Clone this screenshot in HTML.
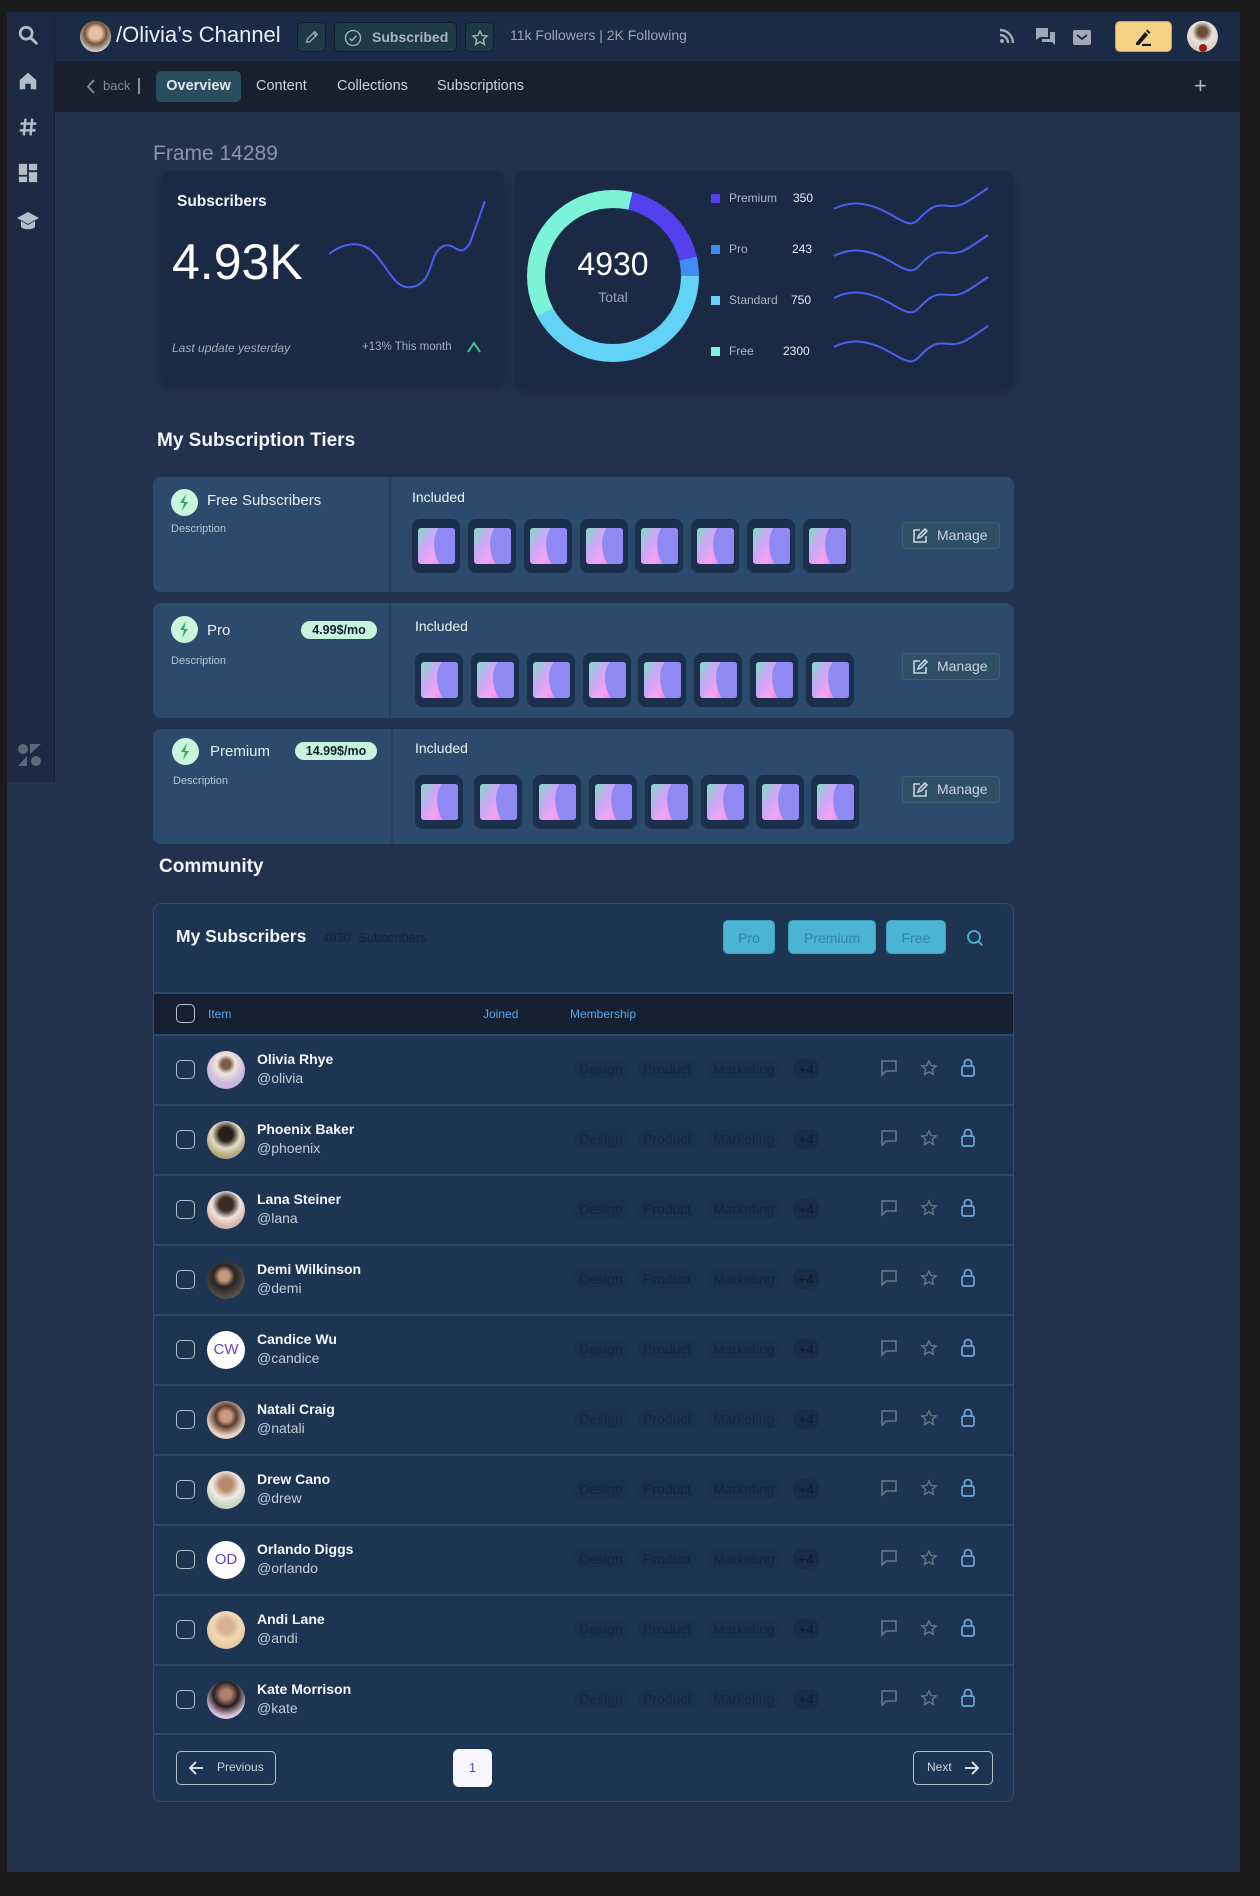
<!DOCTYPE html>
<html><head><meta charset="utf-8">
<style>
*{box-sizing:border-box;margin:0;padding:0}
body{width:1260px;height:1896px;background:#1b1b1b;font-family:"Liberation Sans",sans-serif;position:relative;overflow:hidden;color:#fff}
.abs{position:absolute}
#main{left:7px;top:12px;width:1233px;height:1860px;background:#22324d}
#side{left:7px;top:12px;width:48px;height:770px;background:#1b2a42;border-right:1px solid #15202f}
#top{left:55px;top:12px;width:1185px;height:49px;background:#1c2b45}
#nav{left:55px;top:61px;width:1185px;height:51px;background:#16202f}
.btn{position:absolute;border:1px solid #111c2a;background:#1f3a47;border-radius:5px}
.card{position:absolute;background:#1a2a45;border-radius:10px;box-shadow:0 3px 8px rgba(0,0,0,.25)}
.tier{position:absolute;left:153px;width:861px;height:115px;background:#2c4a6b;border-radius:8px}
.tier .div{position:absolute;left:236px;top:0;width:2px;height:100%;background:#24405f}
.ic{position:absolute;width:27px;height:27px;border-radius:50%;background:#c9f5dc}
.tt{position:absolute;font-size:15px;color:#e8eef5}
.desc{position:absolute;font-size:11px;color:#b7c4d3}
.price{position:absolute;height:18px;border-radius:9px;background:#c6f4dc;color:#12202e;font-size:12.5px;font-weight:bold;text-align:center;line-height:18px}
.inc{position:absolute;font-size:14px;color:#eef2f7}
.tile{position:absolute;width:48px;height:54px;background:#1c2f4c;border-radius:8px}
.tile i{position:absolute;left:6px;top:9px;width:37px;height:36px;border-radius:3px;background:linear-gradient(120deg,#7ee0c0 0%,#c9a8f5 30%,#f4a3f0 55%,#ec8ff0 70%),#8c8cf5;overflow:hidden}
.tile i:after{content:"";position:absolute;left:16px;top:-4px;width:30px;height:48px;border-radius:40% 0 0 60%;background:#8f8af3}
.mng{position:absolute;left:749px;width:98px;height:27px;background:#2e4f66;border:1px solid #3c6076;border-radius:4px;color:#c9d3df;font-size:14px;line-height:25px;padding-left:34px}
.mng svg{position:absolute;left:9px;top:5px}
#tbl{left:153px;top:903px;width:861px;height:899px;background:#1d3453;border:1px solid #2f4a6a;border-radius:8px;overflow:hidden}
.row{position:absolute;left:0;width:861px;height:70px;border-top:2px solid #2d4a6b}
.cb{position:absolute;width:19px;height:19px;border:1.5px solid #b6c0cc;border-radius:5px}
.av{position:absolute;left:53px;top:15px;width:38px;height:38px;border-radius:50%}
.nm{position:absolute;left:103px;top:15px;font-size:14px;color:#f4f6f9;font-weight:bold}
.hd{position:absolute;left:103px;top:34px;font-size:14px;color:#c5cdd8}
.tag{position:absolute;top:23px;font-size:14px;color:#13224a;padding:2px 5px;border-radius:8px;background:#1b3150}
.pf{position:absolute;top:16px;width:52px;height:34px;background:#4bb3d4;border-radius:5px;color:#2d86ad;font-size:14px;text-align:center;line-height:34px;border:1px solid #3d9fc2}
</style></head><body>
<div id="main" class="abs"></div>
<div id="side" class="abs">
<svg class="abs" style="left:10px;top:12px" width="22" height="22" viewBox="0 0 24 24"><circle cx="10" cy="10" r="6.5" fill="none" stroke="#b3bcc8" stroke-width="3"/><path d="M15 15l6 6" stroke="#b3bcc8" stroke-width="3.2" stroke-linecap="round"/></svg>
<svg class="abs" style="left:10px;top:58px" width="22" height="22" viewBox="0 0 24 24"><path d="M3 11L12 3l9 8v10h-6v-6h-6v6H3z" fill="#b3bcc8"/></svg>
<svg class="abs" style="left:11px;top:105px" width="20" height="20" viewBox="0 0 24 24"><path d="M9 2L7 22M17 2l-2 20M3 8h19M2 16h19" stroke="#b3bcc8" stroke-width="3"/></svg>
<svg class="abs" style="left:10px;top:150px" width="22" height="22" viewBox="0 0 24 24"><path d="M2 2h9v12H2zM13 2h9v7h-9zM13 11h9v11h-9zM2 16h9v6H2z" fill="#b3bcc8"/></svg>
<svg class="abs" style="left:9px;top:198px" width="24" height="22" viewBox="0 0 24 22"><path d="M12 2L1 8l11 6 11-6z" fill="#b3bcc8"/><path d="M5 11v6c3 3 11 3 14 0v-6l-7 4z" fill="#b3bcc8"/></svg>
<svg class="abs" style="left:10px;top:731px" width="26" height="24" viewBox="0 0 26 24"><circle cx="6" cy="6" r="5" fill="#5e6a7a"/><path d="M13 1h11l-11 10z" fill="#5e6a7a"/><path d="M1 23l9-10v10z" fill="#5e6a7a"/><circle cx="19" cy="18" r="5" fill="#5e6a7a"/></svg>
</div>
<div id="top" class="abs"></div>
<div id="nav" class="abs"></div>
<div class="abs" style="left:80px;top:21px;width:31px;height:31px;border-radius:50%;background:radial-gradient(circle at 50% 40%,#e2c2a6 0 25%,#7a5236 45%,#cfd6df 75%)"></div>
<div class="abs" style="left:116px;top:22px;font-size:22px;color:#e8edf3">/Olivia’s Channel</div>
<div class="btn" style="left:297px;top:22px;width:29px;height:30px"><svg style="position:absolute;left:6px;top:6px" width="16" height="16" viewBox="0 0 24 24"><path d="M4 20l1-5L16 4l4 4L9 19z M14 6l4 4" fill="none" stroke="#aab4c0" stroke-width="1.8"/></svg></div>
<div class="btn" style="left:334px;top:22px;width:123px;height:30px"><svg style="position:absolute;left:9px;top:6px" width="18" height="18" viewBox="0 0 24 24"><circle cx="12" cy="12" r="10" fill="none" stroke="#aab4c0" stroke-width="1.8"/><path d="M7.5 12.5l3 3 6-6.5" fill="none" stroke="#aab4c0" stroke-width="1.8"/></svg><span style="position:absolute;left:37px;top:6px;font-size:14px;color:#aab4c0;font-weight:bold">Subscribed</span></div>
<div class="btn" style="left:465px;top:22px;width:29px;height:30px"><svg style="position:absolute;left:5px;top:6px" width="18" height="18" viewBox="0 0 24 24"><path d="M12 2.5l2.9 6.2 6.6.7-5 4.5 1.4 6.6L12 17.2l-5.9 3.3 1.4-6.6-5-4.5 6.6-.7z" fill="none" stroke="#aab4c0" stroke-width="1.8"/></svg></div>
<div class="abs" style="left:510px;top:27px;font-size:14px;color:#9aa5b4">11k Followers | 2K Following</div>
<svg class="abs" style="left:999px;top:28px" width="16" height="16" viewBox="0 0 16 16"><circle cx="3" cy="13" r="2" fill="#a0a9b5"/><path d="M1 7a8 8 0 0 1 8 8M1 2a13 13 0 0 1 13 13" fill="none" stroke="#a0a9b5" stroke-width="2.4"/></svg>
<svg class="abs" style="left:1036px;top:28px" width="19" height="18" viewBox="0 0 19 18"><path d="M0 0h12v9H4l-4 3z" fill="#a0a9b5"/><path d="M14 4h5v13l-3-3H6v-3h8z" fill="#a0a9b5"/></svg>
<svg class="abs" style="left:1073px;top:30px" width="18" height="15" viewBox="0 0 18 15"><rect width="18" height="15" rx="2" fill="#a0a9b5"/><path d="M4 5l5 4 5-4" fill="none" stroke="#1c2b45" stroke-width="1.8"/></svg>
<div class="abs" style="left:1115px;top:21px;width:57px;height:31px;background:#f5d185;border:1px solid #c7a45b;border-radius:5px"><svg style="position:absolute;left:18px;top:7px" width="20" height="17" viewBox="0 0 20 17"><path d="M2 14L11 3l3 3-9 10H2z" fill="#16181c"/><path d="M12 2l1.5-1.5 3 3L15 5z" fill="#16181c"/><path d="M8 16h9" stroke="#16181c" stroke-width="2.2"/></svg></div>
<div class="abs" style="left:1187px;top:21px;width:31px;height:31px;border-radius:50%;background:radial-gradient(circle at 50% 35%,#6b4b3c 0 18%,#e9e2da 40%,#d9d0c6 70%);overflow:hidden"><div style="position:absolute;left:12px;top:23px;width:8px;height:8px;background:#9b1b1b;border-radius:50%"></div></div>
<svg class="abs" style="left:86px;top:79px" width="10" height="15" viewBox="0 0 10 15"><path d="M8 1L2 7.5 8 14" fill="none" stroke="#8691a0" stroke-width="1.8"/></svg>
<div class="abs" style="left:103px;top:78px;font-size:13px;color:#7f8a99">back</div>
<div class="abs" style="left:138px;top:78px;width:2px;height:16px;background:#8691a0"></div>
<div class="abs" style="left:156px;top:71px;width:85px;height:31px;background:#294d5c;border-radius:5px;color:#dfe6ee;font-size:14.5px;font-weight:bold;text-align:center;line-height:31px">Overview</div>
<div class="abs" style="left:256px;top:78px;font-size:14.5px;color:#c9d1db">Content</div>
<div class="abs" style="left:337px;top:78px;font-size:14.5px;color:#c9d1db">Collections</div>
<div class="abs" style="left:437px;top:78px;font-size:14.5px;color:#c9d1db">Subscriptions</div>
<div class="abs" style="left:1194px;top:73px;font-size:22px;color:#aeb7c3">+</div>
<div class="abs" style="left:153px;top:142px;font-size:21px;color:#8a96a8">Frame 14289</div>
<div class="card" style="left:161px;top:171px;width:343px;height:215px"></div>
<div class="abs" style="left:177px;top:193px;font-size:15.5px;font-weight:bold;color:#f2f5f8">Subscribers</div>
<div class="abs" style="left:172px;top:233px;font-size:50px;color:#fff">4.93K</div>
<svg class="abs" style="left:320px;top:195px" width="180" height="100" viewBox="320 195 180 100"><path d="M329 254C345 242 362 240 375 254S395 290 412 287S430 265 435 255S447 243 455 248S465 250 470 243L485 201" fill="none" stroke="#4b5ff0" stroke-width="2"/></svg>
<div class="abs" style="left:172px;top:341px;font-size:12px;font-style:italic;color:#a3adbb">Last update yesterday</div>
<div class="abs" style="left:362px;top:341px;font-size:11.5px;color:#a3adbb">+13% This month</div>
<svg class="abs" style="left:466px;top:341px" width="16" height="12" viewBox="0 0 16 12"><path d="M2 11L8 2l6 9" fill="none" stroke="#3ec48a" stroke-width="2"/></svg>
<div class="card" style="left:515px;top:171px;width:499px;height:217px"></div>
<div class="abs" style="left:527px;top:190px;width:172px;height:172px;border-radius:50%;background:conic-gradient(#7cf3d9 0 13deg,#5440ee 13deg 77deg,#3f8cf2 77deg 90deg,#63d2f7 90deg 242deg,#7cf3d9 242deg 360deg)"></div>
<div class="abs" style="left:545px;top:208px;width:136px;height:136px;border-radius:50%;background:#1a2a45"></div>
<div class="abs" style="left:545px;top:246px;width:136px;text-align:center;font-size:32px;color:#fff">4930</div>
<div class="abs" style="left:545px;top:289px;width:136px;text-align:center;font-size:14px;color:#9aa5b4">Total</div>
<div class="abs" style="left:711px;top:194px;width:9px;height:9px;background:#5440ee"></div>
<div class="abs" style="left:729px;top:191px;font-size:12px;color:#aeb7c3">Premium</div><div class="abs" style="left:793px;top:191px;font-size:12px;color:#e8edf3">350</div>
<div class="abs" style="left:711px;top:245px;width:9px;height:9px;background:#3f8cf2"></div>
<div class="abs" style="left:729px;top:242px;font-size:12px;color:#aeb7c3">Pro</div><div class="abs" style="left:792px;top:242px;font-size:12px;color:#e8edf3">243</div>
<div class="abs" style="left:711px;top:296px;width:9px;height:9px;background:#63d2f7"></div>
<div class="abs" style="left:729px;top:293px;font-size:12px;color:#aeb7c3">Standard</div><div class="abs" style="left:791px;top:293px;font-size:12px;color:#e8edf3">750</div>
<div class="abs" style="left:711px;top:347px;width:9px;height:9px;background:#7cf3d9"></div>
<div class="abs" style="left:729px;top:344px;font-size:12px;color:#aeb7c3">Free</div><div class="abs" style="left:783px;top:344px;font-size:12px;color:#e8edf3">2300</div>
<svg class="abs" style="left:830px;top:180px" width="170" height="200" viewBox="0 0 170 200">
<g fill="none" stroke="#4b5ff0" stroke-width="2">
<path d="M4 29C25 18 45 25 65 37S85 42 95 33S110 25 120 26S135 24 158 8"/>
<path d="M4 29C25 18 45 25 65 37S85 42 95 33S110 25 120 26S135 24 158 8" transform="translate(0,47)"/>
<path d="M4 29C25 18 45 25 65 37S85 42 95 33S110 25 120 26S135 24 158 8" transform="translate(0,89)"/>
<path d="M4 29C25 18 45 25 65 37S85 42 95 33S110 25 120 26S135 24 158 8" transform="translate(0,138)"/>
</g></svg>
<div class="abs" style="left:157px;top:430px;font-size:19px;color:#f2f5f8;font-weight:bold">My Subscription Tiers</div>

<div class="tier" style="top:477px"><div class="div"></div>
<div class="ic" style="left:18px;top:12px"><svg width="27" height="27" viewBox="0 0 27 27"><path d="M15 5l-6 9h4l-2 8 6-9h-4z" fill="#2fa866"/></svg></div>
<div class="tt" style="left:54px;top:15px">Free Subscribers</div><div class="desc" style="left:18px;top:46px">Description</div>
<div class="inc" style="left:259px;top:12px">Included</div>
<div class="tile" style="left:259px;top:42px"><i></i></div><div class="tile" style="left:315px;top:42px"><i></i></div><div class="tile" style="left:371px;top:42px"><i></i></div><div class="tile" style="left:427px;top:42px"><i></i></div><div class="tile" style="left:482px;top:42px"><i></i></div><div class="tile" style="left:538px;top:42px"><i></i></div><div class="tile" style="left:594px;top:42px"><i></i></div><div class="tile" style="left:650px;top:42px"><i></i></div>
<div class="mng" style="top:45px"><svg width="16" height="16" viewBox="0 0 16 16"><path d="M8 2H2v12h12V8" fill="none" stroke="#c9d3df" stroke-width="1.6"/><path d="M6 10l1-3 6-6 2 2-6 6z" fill="none" stroke="#c9d3df" stroke-width="1.6"/></svg>Manage</div>
</div>

<div class="tier" style="top:603px"><div class="div"></div>
<div class="ic" style="left:18px;top:13px"><svg width="27" height="27" viewBox="0 0 27 27"><path d="M15 5l-6 9h4l-2 8 6-9h-4z" fill="#2fa866"/></svg></div>
<div class="tt" style="left:54px;top:19px">Pro</div><div class="price" style="left:148px;top:18px;width:76px">4.99$/mo</div><div class="desc" style="left:18px;top:52px">Description</div>
<div class="inc" style="left:262px;top:15px">Included</div>
<div class="tile" style="left:262px;top:50px"><i></i></div><div class="tile" style="left:318px;top:50px"><i></i></div><div class="tile" style="left:374px;top:50px"><i></i></div><div class="tile" style="left:430px;top:50px"><i></i></div><div class="tile" style="left:485px;top:50px"><i></i></div><div class="tile" style="left:541px;top:50px"><i></i></div><div class="tile" style="left:597px;top:50px"><i></i></div><div class="tile" style="left:653px;top:50px"><i></i></div>
<div class="mng" style="top:50px"><svg width="16" height="16" viewBox="0 0 16 16"><path d="M8 2H2v12h12V8" fill="none" stroke="#c9d3df" stroke-width="1.6"/><path d="M6 10l1-3 6-6 2 2-6 6z" fill="none" stroke="#c9d3df" stroke-width="1.6"/></svg>Manage</div>
</div>

<div class="tier" style="top:729px"><div class="div" style="left:238px"></div>
<div class="ic" style="left:19px;top:9px"><svg width="27" height="27" viewBox="0 0 27 27"><path d="M15 5l-6 9h4l-2 8 6-9h-4z" fill="#2fa866"/></svg></div>
<div class="tt" style="left:57px;top:14px">Premium</div><div class="price" style="left:142px;top:13px;width:82px">14.99$/mo</div><div class="desc" style="left:20px;top:46px">Description</div>
<div class="inc" style="left:262px;top:11px">Included</div>
<div class="tile" style="left:262px;top:46px"><i></i></div><div class="tile" style="left:321px;top:46px"><i></i></div><div class="tile" style="left:380px;top:46px"><i></i></div><div class="tile" style="left:436px;top:46px"><i></i></div><div class="tile" style="left:492px;top:46px"><i></i></div><div class="tile" style="left:548px;top:46px"><i></i></div><div class="tile" style="left:603px;top:46px"><i></i></div><div class="tile" style="left:658px;top:46px"><i></i></div>
<div class="mng" style="top:47px"><svg width="16" height="16" viewBox="0 0 16 16"><path d="M8 2H2v12h12V8" fill="none" stroke="#c9d3df" stroke-width="1.6"/><path d="M6 10l1-3 6-6 2 2-6 6z" fill="none" stroke="#c9d3df" stroke-width="1.6"/></svg>Manage</div>
</div>

<div class="abs" style="left:159px;top:856px;font-size:19px;color:#f2f5f8;font-weight:bold">Community</div>
<div id="tbl" class="abs">
<div class="abs" style="left:22px;top:22px;font-size:17.5px;font-weight:bold;color:#f2f5f8">My Subscribers</div>
<div class="abs" style="left:168px;top:26px;font-size:13px;color:#13223e">4930&nbsp; Subscribers</div>
<div class="pf" style="left:569px">Pro</div>
<div class="pf" style="left:634px;width:88px">Premium</div>
<div class="pf" style="left:732px;width:60px">Free</div>
<svg class="abs" style="left:812px;top:25px" width="18" height="18" viewBox="0 0 18 18"><circle cx="8" cy="8" r="6" fill="none" stroke="#4bb3d4" stroke-width="1.8"/><path d="M12.5 12.5l4 4" stroke="#4bb3d4" stroke-width="1.8"/></svg>
<div class="abs" style="left:0;top:88px;width:861px;height:43px;background:#141f31;border-top:2px solid #2d4a6b"></div>
<div class="cb" style="left:22px;top:100px"></div>
<div class="abs" style="left:54px;top:103px;font-size:12px;color:#5aa9e6">Item</div>
<div class="abs" style="left:329px;top:103px;font-size:12px;color:#5aa9e6">Joined</div>
<div class="abs" style="left:416px;top:103px;font-size:12px;color:#5aa9e6">Membership</div>
<div id="rows"></div>
<div class="abs" style="left:22px;top:847px;width:100px;height:34px;border:1.5px solid #b6c0cc;border-radius:5px;font-size:12px;color:#c9d1db;line-height:31px;padding-left:40px"><svg style="position:absolute;left:12px;top:9px" width="15" height="14" viewBox="0 0 15 14"><path d="M14 7H2M7 1L1 7l6 6" fill="none" stroke="#e8edf3" stroke-width="1.8"/></svg>Previous</div>
<div class="abs" style="left:299px;top:845px;width:39px;height:38px;background:#f7f5ff;border-radius:6px;text-align:center;line-height:38px;font-size:13px;color:#6941c6">1</div>
<div class="abs" style="left:759px;top:847px;width:80px;height:34px;border:1.5px solid #b6c0cc;border-radius:5px;font-size:12px;color:#c9d1db;line-height:31px;padding-left:13px">Next<svg style="position:absolute;left:50px;top:9px" width="15" height="14" viewBox="0 0 15 14"><path d="M1 7h12M8 1l6 6-6 6" fill="none" stroke="#e8edf3" stroke-width="1.8"/></svg></div>
<div class="abs" style="left:0;top:829px;width:861px;height:2px;background:#2d4a6b"></div>
</div>
<script>
var p=[["Olivia Rhye","olivia","radial-gradient(circle at 50% 35%,#7a5a4a 0 14%,#f0e6dc 30%,#cdb9dd 60%)"],["Phoenix Baker","phoenix","radial-gradient(circle at 50% 35%,#2a1e18 0 22%,#e6dcc4 45%,#b5a67a 70%)"],["Lana Steiner","lana","radial-gradient(circle at 50% 35%,#3a2a22 0 22%,#efe4dc 45%,#d9b5aa 70%)"],["Demi Wilkinson","demi","radial-gradient(circle at 45% 40%,#c29a80 0 16%,#2a2320 35%,#55504a 70%)"],["Candice Wu","candice","CW"],["Natali Craig","natali","radial-gradient(circle at 50% 40%,#c99a80 0 18%,#5a3a2a 35%,#e7d2c4 65%)"],["Drew Cano","drew","radial-gradient(circle at 50% 35%,#b78a70 0 20%,#f0ece6 45%,#c8d4c0 70%)"],["Orlando Diggs","orlando","OD"],["Andi Lane","andi","radial-gradient(circle at 50% 40%,#d9b090 0 22%,#f0d8b8 45%,#e8c8a0 70%)"],["Kate Morrison","kate","radial-gradient(circle at 50% 35%,#b08070 0 16%,#2a1e1e 40%,#d9c4dc 70%)"]];
var h="";
p.forEach(function(r,i){
var av=(r[2].length==2)?'<div class="av" style="background:#fff;color:#6941c6;text-align:center;line-height:38px;font-size:15px">'+r[2]+'</div>':'<div class="av" style="background:'+r[2]+'"></div>';
h+='<div class="row" style="top:'+(130+i*70)+'px"><div class="cb" style="left:22px;top:24px"></div>'+av+'<div class="nm">'+r[0]+'</div><div class="hd">@'+r[1]+'</div>'+
'<div class="tag" style="left:420px">Design</div><div class="tag" style="left:484px">Product</div><div class="tag" style="left:554px">Marketing</div><div class="tag" style="left:639px;background:#1a2d48;color:#0f1a2e">+4</div>'+
'<svg style="position:absolute;left:727px;top:24px" width="16" height="17" viewBox="0 0 16 17"><path d="M1 1h14v10H5l-4 4z" fill="none" stroke="#6b7686" stroke-width="1.6"/></svg>'+
'<svg style="position:absolute;left:766px;top:23px" width="18" height="18" viewBox="0 0 24 24"><path d="M12 2.5l2.9 6.2 6.6.7-5 4.5 1.4 6.6L12 17.2l-5.9 3.3 1.4-6.6-5-4.5 6.6-.7z" fill="none" stroke="#6b7686" stroke-width="1.8"/></svg>'+
'<svg style="position:absolute;left:807px;top:22px" width="14" height="19" viewBox="0 0 14 19"><rect x="1" y="8" width="12" height="10" rx="2" fill="none" stroke="#6fa8dc" stroke-width="1.7"/><path d="M3.5 8V5a3.5 3.5 0 0 1 7 0v3" fill="none" stroke="#6fa8dc" stroke-width="1.7"/></svg></div>';
});
document.getElementById("rows").innerHTML=h;
</script>
</body></html>
